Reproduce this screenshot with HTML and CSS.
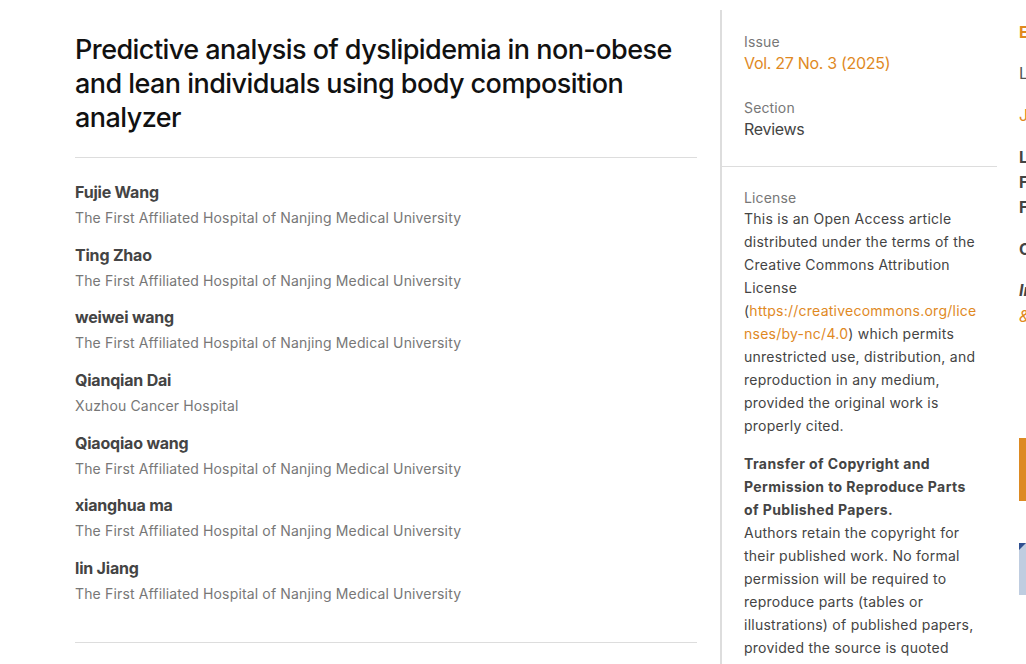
FILE: index.html
```html
<!DOCTYPE html>
<html lang="en">
<head>
<meta charset="utf-8">
<title>Predictive analysis of dyslipidemia</title>
<link rel="stylesheet" href="styles.css">
</head>
<body>
<div class="page">
  <main class="main">
    <h1 class="title">Predictive analysis of dyslipidemia in non-obese and lean individuals using body composition analyzer</h1>
    <hr class="rule">
    <ul class="authors">
      <li><div class="name">Fujie Wang</div><div class="aff">The First Affiliated Hospital of Nanjing Medical University</div></li>
      <li><div class="name">Ting Zhao</div><div class="aff">The First Affiliated Hospital of Nanjing Medical University</div></li>
      <li><div class="name">weiwei wang</div><div class="aff">The First Affiliated Hospital of Nanjing Medical University</div></li>
      <li><div class="name">Qianqian Dai</div><div class="aff">Xuzhou Cancer Hospital</div></li>
      <li><div class="name">Qiaoqiao wang</div><div class="aff">The First Affiliated Hospital of Nanjing Medical University</div></li>
      <li><div class="name">xianghua ma</div><div class="aff">The First Affiliated Hospital of Nanjing Medical University</div></li>
      <li><div class="name">lin Jiang</div><div class="aff">The First Affiliated Hospital of Nanjing Medical University</div></li>
    </ul>
    <hr class="rule rule-bottom">
  </main>
  <aside class="details">
    <div class="block">
      <div class="label">Issue</div>
      <a class="value link" href="#">Vol. 27 No. 3 (2025)</a>
      <div class="label label-gap">Section</div>
      <div class="value">Reviews</div>
    </div>
    <div class="block license">
      <div class="label label-lic">License</div>
      <p class="ltext">This is an Open Access article distributed under the terms of the Creative Commons Attribution License (<a class="link url" href="#">https://creativecommons.org/licenses/by-nc/4.0</a>) which permits unrestricted use, distribution, and reproduction in any medium, provided the original work is properly cited.</p>
      <p class="ltext ltext-gap"><strong>Transfer of Copyright and Permission to Reproduce Parts of Published Papers.</strong><br>Authors retain the copyright for their published work. No formal permission will be required to reproduce parts (tables or illustrations) of published papers, provided the source is quoted appropriately and permission is granted.</p>
    </div>
  </aside>
  <aside class="sidebar">
    <div class="sb-head">Editorial Board</div>
    <div class="sb-text">Lorem</div>
    <a class="sb-link" href="#">Journal Information</a>
    <div class="sb-bold">Language<br>Font Size<br>Fonts</div>
    <div class="sb-bold sb-c">Current Issue</div>
    <div class="sb-italic">Information</div>
    <a class="sb-amp" href="#">&amp; Authors</a>
    <div class="sb-block"></div>
    <div class="sb-image"><span class="sb-tri"></span></div>
  </aside>
</div>
</body>
</html>
```
FILE: styles.css
```css
html, body {
  margin: 0;
  padding: 0;
  overflow: hidden;
  background: #fff;
}
body {
  font-family: Inter, "Noto Sans", sans-serif;
  color: #444;
}
.page {
  display: flex;
  align-items: flex-start;
  width: 1300px;
  height: 664px;
}
.main {
  width: 622px;
  padding: 33px 23px 0 75px;
  flex: none;
}
.title {
  margin: 0;
  font-size: 27px;
  line-height: 34px;
  font-weight: 500;
  color: #111;
  letter-spacing: -0.55px;
}
.rule {
  border: 0;
  border-top: 1px solid #ddd;
  margin: 22px 0 0;
}
.rule-bottom {
  margin-top: 38px;
}
.authors {
  list-style: none;
  margin: 22px 0 0;
  padding: 0;
  display: flex;
  flex-direction: column;
  gap: 14.67px;
}
.name {
  font-size: 16px;
  line-height: 24px;
  font-weight: 700;
  color: #444;
  letter-spacing: -0.2px;
}
.aff {
  margin-top: 4px;
  font-size: 14px;
  line-height: 20px;
  color: #777;
  letter-spacing: 0.15px;
}
.details {
  flex: none;
  width: 256px;
  margin-top: 10px;
  height: 654px;
  border-left: 2px solid #ddd;
  padding-right: 19px;
}
.block {
  padding: 22px 0 0 22px;
}
.block:first-child {
  padding-bottom: 26px;
  border-bottom: 1px solid #ddd;
  margin-right: -19px;
  padding-right: 19px;
}
.label {
  font-size: 14px;
  line-height: 20px;
  color: #777;
  letter-spacing: 0.15px;
}
.label-gap {
  margin-top: 24px;
}
.label-lic {
  line-height: 18px;
}
.value {
  display: block;
  font-size: 16px;
  line-height: 22px;
  color: #444;
  text-decoration: none;
  letter-spacing: -0.3px;
}
.link {
  color: #e0891f;
  text-decoration: none;
}
.value.link {
  color: #e0891f;
}
.license {
  padding-top: 22px;
}
.ltext {
  margin: 0;
  font-size: 14px;
  line-height: 23px;
  color: #444;
  letter-spacing: 0.25px;
}
.url {
  overflow-wrap: anywhere;
}
.ltext-gap {
  margin-top: 15px;
}
.ltext strong {
  font-weight: 700;
  letter-spacing: 0.4px;
}
.sidebar {
  flex: none;
  width: 260px;
  margin-left: 22px;
  padding-top: 21px;
  display: flex;
  flex-direction: column;
  font-size: 16px;
  line-height: 22px;
}
.sb-head {
  color: #e0891f;
  font-weight: 700;
}
.sb-text {
  margin-top: 19px;
  color: #555;
}
.sb-link {
  margin-top: 20px;
  color: #e0891f;
  text-decoration: none;
}
.sb-bold {
  margin-top: 19px;
  font-weight: 700;
  color: #444;
  line-height: 25px;
}
.sb-c {
  margin-top: 17px;
}
.sb-italic {
  margin-top: 17px;
  font-weight: 700;
  font-style: italic;
  color: #444;
}
.sb-amp {
  margin-top: 4px;
  color: #e0891f;
  font-style: italic;
  text-decoration: none;
}
.sb-block {
  margin-top: 111px;
  width: 220px;
  height: 63px;
  background: #dd8a22;
}
.sb-image {
  margin-top: 42px;
  width: 220px;
  height: 52px;
  background: #bfcde0;
  position: relative;
}
.sb-tri {
  position: absolute;
  left: 0;
  top: 0;
  width: 0;
  height: 0;
  border-top: 7px solid #2f5090;
  border-right: 7px solid transparent;
}
```
